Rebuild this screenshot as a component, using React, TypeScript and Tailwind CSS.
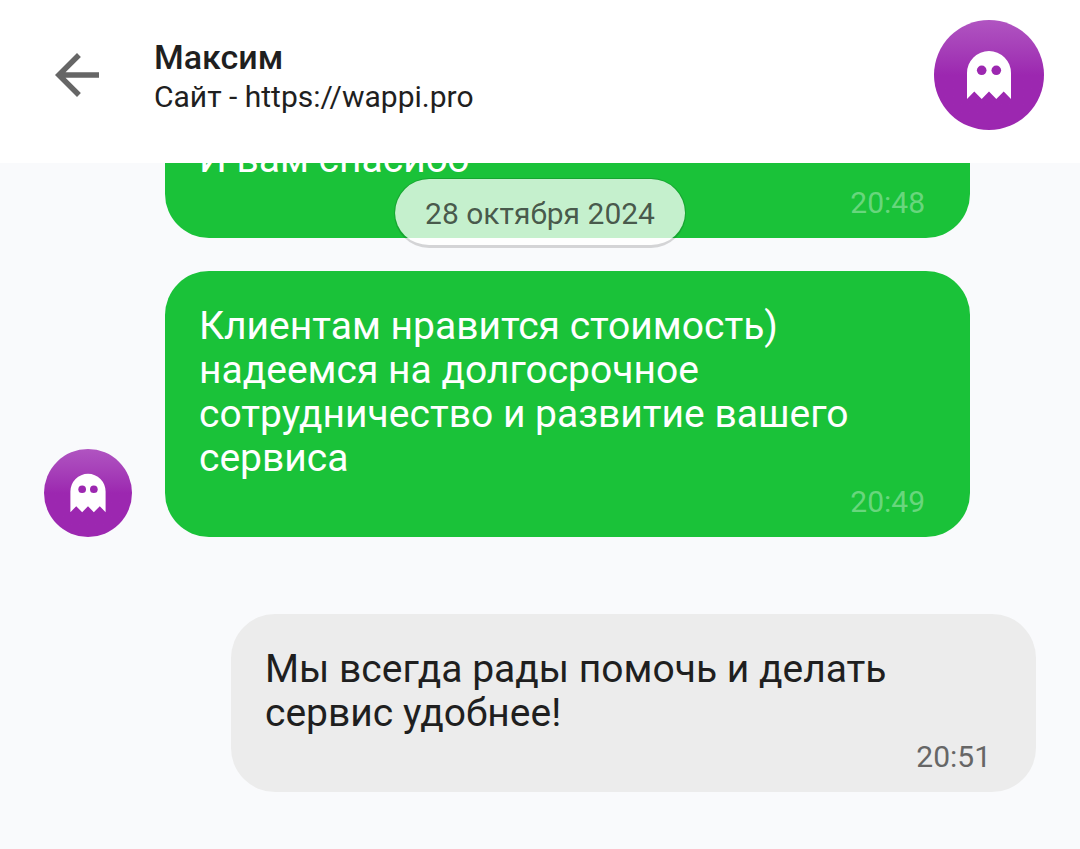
import { MdArrowBack } from 'react-icons/md';

type Message = {
  text: string;
  time: string;
  incoming: boolean;
  avatar?: boolean;
};

const messages: Message[] = [
  { text: 'И вам спасибо', time: '20:48', incoming: true },
  {
    text: 'Клиентам нравится стоимость) надеемся на долгосрочное сотрудничество и развитие вашего сервиса',
    time: '20:49',
    incoming: true,
    avatar: true,
  },
  {
    text: 'Мы всегда рады помочь и делать сервис удобнее!',
    time: '20:51',
    incoming: false,
  },
];

function Avatar({ className }: { className: string }) {
  return (
    <div
      className={`shrink-0 rounded-full bg-linear-to-b from-[#b054c1] to-[#9c27b0] to-50% ${className}`}
    >
      <svg viewBox="0 0 110 110" className="size-full" aria-hidden="true">
        <path
          fill="#fff"
          d="M33 79V53a22 22 0 0 1 44 0v26l-7.3-7.5-7.4 7.5-7.3-7.5-7.3 7.5-7.4-7.5z"
        />
        <circle cx="47.7" cy="50.3" r="4.8" fill="#9c27b0" />
        <circle cx="62.3" cy="50.3" r="4.8" fill="#9c27b0" />
      </svg>
    </div>
  );
}

function IncomingMessage({ text, time, avatar }: Message) {
  return (
    <div className="flex items-end gap-[33px] pr-[66px]">
      {avatar ? <Avatar className="size-[88px]" /> : <div className="w-[88px] shrink-0" />}
      <div className="flex-1 rounded-[44px] bg-[#1ac239] pt-[33px] pr-[45px] pb-[13px] pl-[34px] text-white">
        <p className="text-[39px] leading-[44px]">{text}</p>
        <time className="block text-right text-[30px] leading-[44px] text-white/35">{time}</time>
      </div>
    </div>
  );
}

function OutgoingMessage({ text, time }: Message) {
  return (
    <div className="mt-11 flex pl-[187px]">
      <div className="flex-1 rounded-[44px] bg-[#ececec] pt-[33px] pr-[45px] pb-[13px] pl-[34px] text-[#1f1f1f]">
        <p className="text-[39px] leading-[44px]">{text}</p>
        <time className="block text-right text-[30px] leading-[44px] text-[#666]">{time}</time>
      </div>
    </div>
  );
}

export default function App() {
  return (
    <div className="flex h-screen flex-col bg-[#f9fafc] font-['Roboto',sans-serif]">
      <header className="flex items-center bg-white pt-5 pr-9 pb-[33px] pl-11">
        <button type="button" aria-label="Назад" className="text-[#666]">
          <MdArrowBack className="size-[66px]" />
        </button>
        <div className="ml-11 flex-1 pt-1 text-[#1f1f1f]">
          <h1 className="text-[34px] leading-10 font-medium">Максим</h1>
          <p className="text-[30px] leading-10">Сайт - https://wappi.pro</p>
        </div>
        <Avatar className="size-[110px]" />
      </header>

      <main className="relative flex min-h-0 flex-1 flex-col justify-end gap-[33px] overflow-hidden px-11 pb-[57px]">
        {messages.map((message) =>
          message.incoming ? (
            <IncomingMessage key={message.time} {...message} />
          ) : (
            <OutgoingMessage key={message.time} {...message} />
          ),
        )}
        <div className="absolute top-[15px] left-1/2 -translate-x-1/2 rounded-full border border-b-[3px] border-black/15 bg-white/75 bg-clip-padding px-[30px] pt-[17px] pb-[13px] text-[30px] leading-[36px] whitespace-nowrap text-black/65">
          28 октября 2024
        </div>
      </main>
    </div>
  );
}
